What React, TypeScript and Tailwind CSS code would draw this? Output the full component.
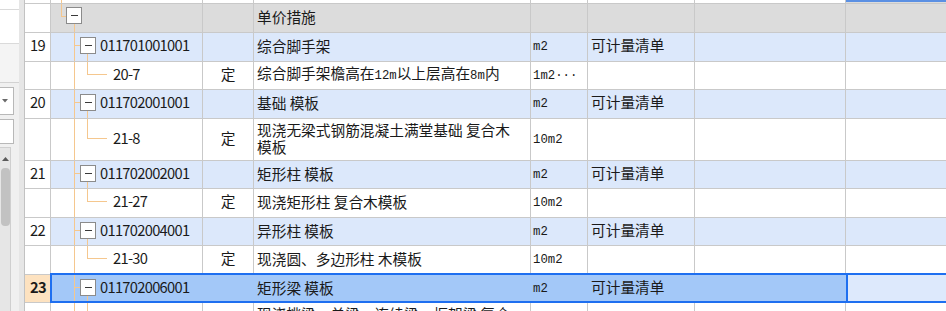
import React from "react";

const ORANGE = "#f5c78e";

type Kind = "top" | "gray" | "parent" | "child" | "selected" | "partial";

function Minus({ x, y }: { x: number; y: number }) {
  return <rect x={x} y={y} width={7} height={1.6} fill="#3a3a3a" />;
}

function Tree({ kind, h }: { kind: Kind; h: number }) {
  const H = h - 1;
  const m = Math.floor((H - 3) / 2) + 0.5;
  const o = ORANGE;
  if (kind === "top") {
    return (
      <svg width={30} height={H} shapeRendering="crispEdges" className="shrink-0">
        <line x1={10.5} y1={0} x2={10.5} y2={H} stroke={o} />
      </svg>
    );
  }
  if (kind === "gray") {
    return (
      <svg width={49} height={H} shapeRendering="crispEdges" className="shrink-0">
        <line x1={10.5} y1={0} x2={10.5} y2={m} stroke={o} />
        <line x1={10.5} y1={m} x2={15} y2={m} stroke={o} />
        <line x1={23.5} y1={20} x2={23.5} y2={H} stroke={o} />
        <rect x={15.5} y={3.5} width={15} height={16} fill="#ffffff" stroke="#8b8b8b" />
        <Minus x={19.5} y={10.7} />
      </svg>
    );
  }
  if (kind === "parent" || kind === "selected") {
    return (
      <svg width={49} height={H} shapeRendering="crispEdges" className="shrink-0">
        <line x1={23.5} y1={0} x2={23.5} y2={H} stroke={o} />
        <line x1={23.5} y1={m} x2={29} y2={m} stroke={o} />
        <line x1={36.5} y1={m + 8} x2={36.5} y2={H} stroke={o} />
        <rect x={29.5} y={m - 8} width={15} height={16} fill="#ffffff" stroke="#8b8b8b" />
        <Minus x={33.5} y={m - 0.8} />
      </svg>
    );
  }
  // child / partial
  return (
    <svg width={62} height={H} shapeRendering="crispEdges" className="shrink-0">
      <line x1={23.5} y1={0} x2={23.5} y2={H} stroke={o} />
      <line x1={36.5} y1={0} x2={36.5} y2={m} stroke={o} />
      <line x1={36.5} y1={m} x2={56} y2={m} stroke={o} />
    </svg>
  );
}

function M({ children }: { children: React.ReactNode }) {
  return <span className="font-['Liberation_Mono',monospace] text-[12.3px]">{children}</span>;
}

type Row = {
  kind: Kind;
  h: number;
  num?: string;
  code?: string;
  ding?: string;
  name?: React.ReactNode;
  unit?: string;
  type?: string;
};

const rows: Row[] = [
  { kind: "top", h: 4 },
  { kind: "gray", h: 29, name: "单价措施" },
  { kind: "parent", h: 29, num: "19", code: "011701001001", name: "综合脚手架", unit: "m2", type: "可计量清单" },
  {
    kind: "child",
    h: 28,
    code: "20-7",
    ding: "定",
    name: (
      <>
        综合脚手架檐高在<M>12m</M>以上层高在<M>8m</M>内
      </>
    ),
    unit: "1m2···",
  },
  { kind: "parent", h: 29, num: "20", code: "011702001001", name: "基础 模板", unit: "m2", type: "可计量清单" },
  {
    kind: "child",
    h: 42,
    code: "21-8",
    ding: "定",
    name: (
      <>
        现浇无梁式钢筋混凝土满堂基础 复合木
        <br />
        模板
      </>
    ),
    unit: "10m2",
  },
  { kind: "parent", h: 28, num: "21", code: "011702002001", name: "矩形柱 模板", unit: "m2", type: "可计量清单" },
  { kind: "child", h: 29, code: "21-27", ding: "定", name: "现浇矩形柱 复合木模板", unit: "10m2" },
  { kind: "parent", h: 28, num: "22", code: "011702004001", name: "异形柱 模板", unit: "m2", type: "可计量清单" },
  { kind: "child", h: 29, code: "21-30", ding: "定", name: "现浇圆、多边形柱 木模板", unit: "10m2" },
  { kind: "selected", h: 28, num: "23", code: "011702006001", name: "矩形梁 模板", unit: "m2", type: "可计量清单" },
  {
    kind: "partial",
    h: 42,
    code: "",
    ding: "定",
    name: (
      <>
        现浇挑梁、单梁、连续梁、框架梁 复合
        <br />
        木模板
      </>
    ),
    unit: "10m2",
  },
];

function GridRow({ r }: { r: Row }) {
  const sel = r.kind === "selected";
  const bg =
    r.kind === "gray"
      ? "bg-[#dcdcdc]"
      : r.kind === "parent"
      ? "bg-[#dce8fb]"
      : sel
      ? "bg-[#a3c8f8]"
      : "bg-white";
  const line = sel ? "border-[#a3c8f8]" : "border-[#c9c9c9]";
  const base = `h-full shrink-0 border-r ${line} flex items-center`;
  const cell = `${base} pb-[3px]`;
  return (
    <div
      className={`relative flex shrink-0 border-b border-[#c9c9c9] ${r.kind === "top" ? "bg-white" : ""}`}
      style={{ height: r.h }}
    >
      <div
        className={`w-[26px] h-full shrink-0 border-r border-[#c9c9c9] flex items-center pl-[5px] pb-[3px] tracking-[-0.6px] ${
          sel ? "bg-[#fde2c0] font-bold" : "bg-white"
        }`}
      >
        {r.num}
      </div>
      <div className={`flex h-full ${r.kind === "top" ? "bg-white" : bg}`}>
        <div className={`w-[152px] h-full shrink-0 border-r ${line} flex items-start`}>
          <Tree kind={r.kind} h={r.h} />
          {r.code !== undefined && (
            <div className="h-full flex items-center pb-[3px] tracking-[-0.7px] whitespace-nowrap">{r.code}</div>
          )}
        </div>
        <div className={`${cell} w-[51px] justify-center`}>{r.ding}</div>
        <div className={`${cell} w-[277px] pl-[3px] leading-[17px] whitespace-nowrap`}>
          <div>{r.name}</div>
        </div>
        <div className={`${base} pt-[1px] w-[57px] pl-[2px] font-['Liberation_Mono',monospace] text-[12.3px] whitespace-nowrap`}>
          {r.unit}
        </div>
        <div className={`${cell} w-[107px] pl-[3px] whitespace-nowrap`}>{r.type}</div>
        <div className={`${cell} w-[151px] ${sel ? "border-r-0" : ""}`}></div>
      </div>
      <div
        className={`flex-1 h-full ${
          r.kind === "top"
            ? "bg-[#dcdcdc] border-t-2 border-[#5b90e3]"
            : sel
            ? "bg-[#dde9fc] border-l-2 border-[#1e6ff0]"
            : bg
        }`}
      ></div>
      {sel && (
        <div className="absolute left-[25px] top-[-2px] w-[960px] h-[30px] border-2 border-[#1e6ff0] pointer-events-none" />
      )}
    </div>
  );
}

function LeftPanel() {
  return (
    <div className="w-[19px] h-full shrink-0 bg-[#f0f0f0] flex flex-col">
      <div className="h-[10px] bg-white border-b border-[#dadada] shrink-0" />
      <div className="h-[34px] bg-white border-b border-[#dadada] shrink-0" />
      <div className="h-[39px] bg-[#f4f4f4] border-b border-[#d2d2d2] shrink-0" />
      <div className="h-[4px] shrink-0" />
      <div className="h-[28px] w-[14px] bg-white border border-l-0 border-[#b8b8b8] shrink-0 flex items-center pl-[2px]">
        <svg width={6} height={4} viewBox="0 0 6 4">
          <path d="M0 0 L6 0 L3 3.5 Z" fill="#6a6a6a" />
        </svg>
      </div>
      <div className="h-[4px] shrink-0" />
      <div className="h-[25px] w-[14px] bg-white border border-l-0 border-[#b8b8b8] shrink-0" />
      <div className="h-[3px] shrink-0" />
      <div className="flex-1 flex">
        <div className="w-[11px] h-full bg-[#e6e6e6] border-t border-r border-[#cfcfcf] flex flex-col items-center">
          <svg width={9} height={6} className="mt-[8px]" viewBox="0 0 9 6">
            <path d="M1 5 L4.5 1 L8 5 Z" fill="#5a5a5a" />
          </svg>
          <div className="mt-[6px] w-[9px] h-[58px] rounded-[4px] bg-[#c2c2c2]" />
        </div>
      </div>
    </div>
  );
}

export default function App() {
  return (
    <div className="w-[946px] h-[311px] overflow-hidden flex bg-white font-['Noto_Sans_CJK_SC',sans-serif] text-[14.7px] text-[#1a1a1a]">
      <LeftPanel />
      <div className="w-[5px] h-full shrink-0 bg-[#e6e6e6]" />
      <div className="flex-1 h-full border-l border-[#c2c2c2] flex flex-col overflow-hidden">
        {rows.map((r, i) => (
          <GridRow key={i} r={r} />
        ))}
      </div>
    </div>
  );
}
